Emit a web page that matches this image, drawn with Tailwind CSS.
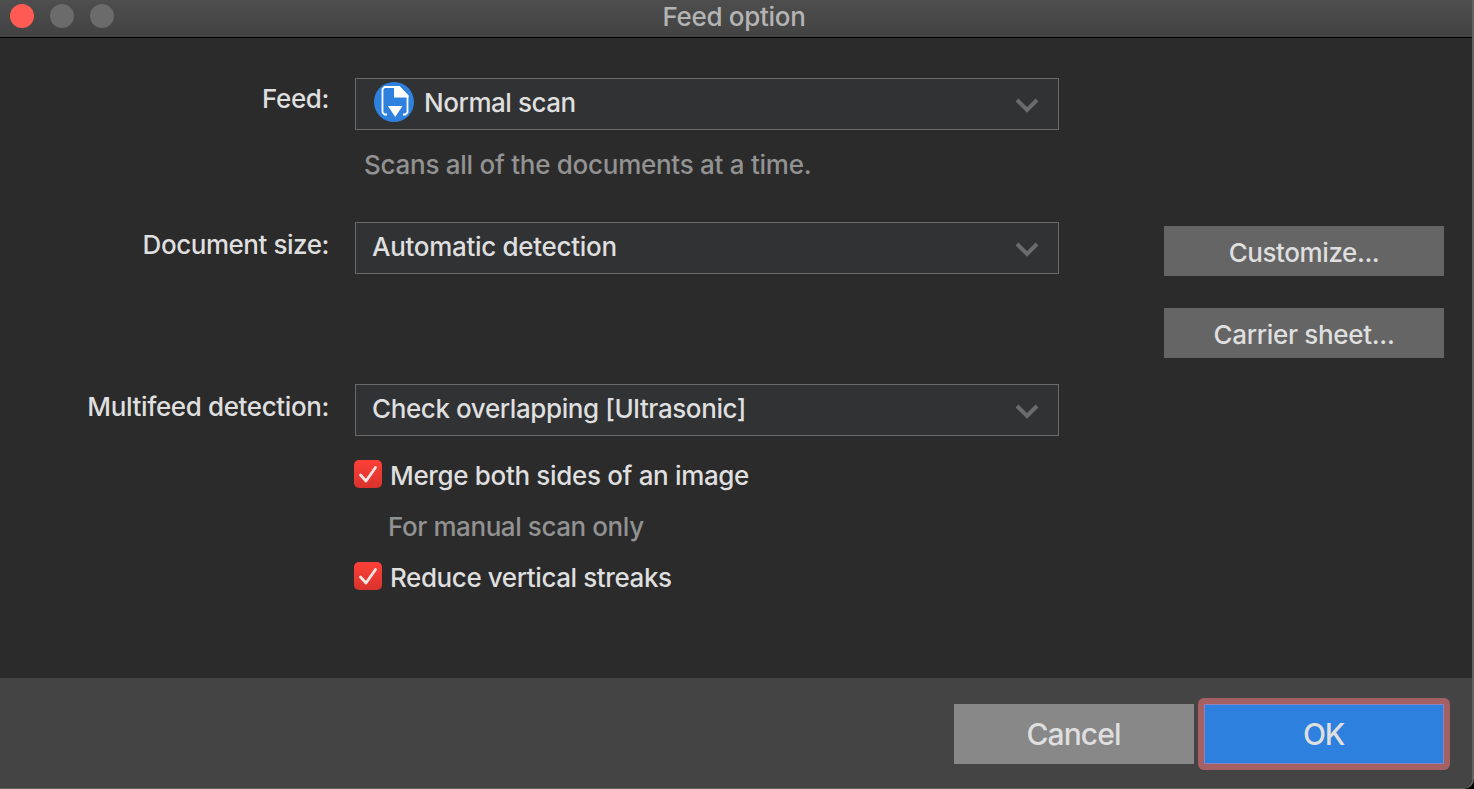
<!DOCTYPE html>
<html lang="en">
<head>
<meta charset="utf-8">
<title>Feed option</title>
<script src="https://cdn.jsdelivr.net/npm/@tailwindcss/browser@4"></script>
</head>
<body class="bg-black">
<div class="flex h-[789px] w-[1474px] flex-col overflow-hidden rounded-br-[10px] border-r-2 border-b border-[#626262] bg-[#2b2b2b] font-['Inter',sans-serif] text-[26px] leading-8 font-[450] whitespace-nowrap text-[#dfdfdf]">
  <header class="grid h-[38px] shrink-0 grid-cols-[1fr_auto_1fr] items-start border-b border-black bg-linear-to-b from-[#4e4e4e] to-[#424242]">
    <div class="flex gap-4 pt-1 pl-[10px]">
      <span class="size-6 rounded-full bg-[#ff5b53]"></span>
      <span class="size-6 rounded-full bg-[#6b6b6b]"></span>
      <span class="size-6 rounded-full bg-[#6b6b6b]"></span>
    </div>
    <h1 class="mt-px mr-1 tracking-[-0.3px] text-[#b4b4b4]">Feed option</h1>
  </header>

  <main class="flex h-[640px] shrink-0 pt-10">
    <div class="flex w-[329px] flex-col items-end">
      <div class="mt-[5px] tracking-[-0.4px]">Feed:</div>
      <div class="mt-[114px] tracking-[-0.45px]">Document size:</div>
      <div class="mt-[130px] tracking-[-0.38px]">Multifeed detection:</div>
    </div>
    <div class="ml-[26px] w-[704px]">
      <div class="flex h-[52px] items-center border border-[#6a6a6a] bg-[#313234] pr-[19px] pl-[18px]">
        <svg class="-mt-1 size-10" viewBox="0 0 40 40" fill="none"><circle cx="20" cy="20" r="20" fill="#2e81dd"/><path d="M13 32.500H10.500L8.500 30.500V7L10.500 5H25L33.500 14V30.500L31.500 32.500H29" stroke="#fff" stroke-width="1.800"/><path d="M20 4H25.500L34.500 13.500V15.500H20Z" fill="#fff"/><path d="M14 24H28.500L21.200 35Z" fill="#fff"/></svg>
        <span class="-mt-[3px] ml-[10px] flex-1 tracking-[-0.45px]">Normal scan</span>
        <svg class="mt-[2px] h-4 w-[24px]" viewBox="0 0 24 16" fill="none" stroke="#6b6b6b" stroke-width="4"><path d="M2 3L12 13L22 3"/></svg>
      </div>
      <div class="mt-[19px] ml-[9px] tracking-[-0.27px] text-[#929292]">Scans all of the documents at a time.</div>
      <div class="mt-[41px] flex h-[52px] items-center border border-[#6a6a6a] bg-[#313234] pr-[19px] pl-4">
        <span class="-mt-[3px] flex-1 tracking-[-0.3px]">Automatic detection</span>
        <svg class="mt-[2px] h-4 w-[24px]" viewBox="0 0 24 16" fill="none" stroke="#6b6b6b" stroke-width="4"><path d="M2 3L12 13L22 3"/></svg>
      </div>
      <div class="mt-[110px] flex h-[52px] items-center border border-[#6a6a6a] bg-[#313234] pr-[19px] pl-4">
        <span class="-mt-[3px] flex-1 tracking-[-0.4px]">Check overlapping [Ultrasonic]</span>
        <svg class="mt-[2px] h-4 w-[24px]" viewBox="0 0 24 16" fill="none" stroke="#6b6b6b" stroke-width="4"><path d="M2 3L12 13L22 3"/></svg>
      </div>
      <label class="mt-6 -ml-px flex h-8 items-start">
        <svg class="size-7 rounded-[5px] bg-linear-to-b from-[#fd4038] to-[#d9332d]" viewBox="0 0 28 28" fill="none" stroke="#f8e6e5" stroke-width="2.800" stroke-linecap="round" stroke-linejoin="round"><path d="M6.500 15L12 21L21.500 7.500"/></svg>
        <span class="ml-2 tracking-[-0.34px]">Merge both sides of an image</span>
      </label>
      <div class="mt-[19px] ml-[33px] tracking-[-0.42px] text-[#929292]">For manual scan only</div>
      <label class="mt-[19px] -ml-px flex h-8 items-start">
        <svg class="size-7 rounded-[5px] bg-linear-to-b from-[#fd4038] to-[#d9332d]" viewBox="0 0 28 28" fill="none" stroke="#f8e6e5" stroke-width="2.800" stroke-linecap="round" stroke-linejoin="round"><path d="M6.500 15L12 21L21.500 7.500"/></svg>
        <span class="ml-2 tracking-[-0.41px]">Reduce vertical streaks</span>
      </label>
    </div>
    <div class="mt-[148px] ml-[105px] flex w-[280px] flex-col gap-8">
      <button class="h-[50px] bg-[#656565] pt-1 tracking-[-0.42px]">Customize...</button>
      <button class="h-[50px] bg-[#656565] pt-1 tracking-[-0.32px]">Carrier sheet...</button>
    </div>
  </main>

  <footer class="flex flex-1 items-start justify-end bg-[#444444] pt-5 pr-[22px] text-[30px]">
    <button class="mt-[6px] mr-1 h-[60px] w-[240px] bg-[#888888] pr-px tracking-[-0.9px]">Cancel</button>
    <div class="h-[72px] w-[252px] rounded-md bg-[#a46063] p-[6px]">
      <button class="h-[60px] w-[240px] border border-[#8f83bd] bg-[#2d80dd] pr-px tracking-[-1.2px]">OK</button>
    </div>
  </footer>
</div>
</body>
</html>
